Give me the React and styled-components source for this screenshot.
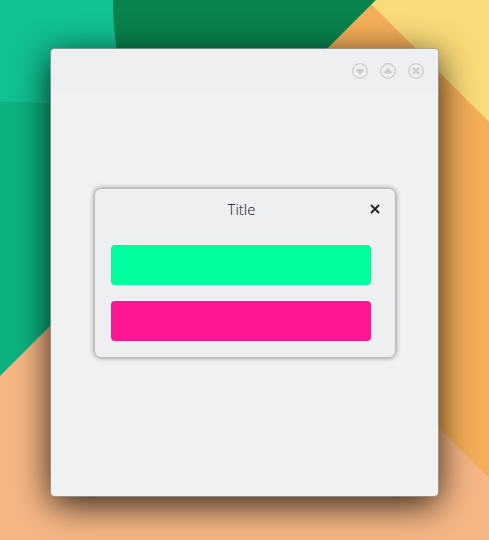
import React from 'react';
import styled, { createGlobalStyle } from 'styled-components';

const GlobalStyle = createGlobalStyle`
  *, *::before, *::after { box-sizing: border-box; }
  body { margin: 0; font-family: "Open Sans", "Noto Sans", sans-serif; }
`;

const Desktop = styled.main`
  position: relative;
  isolation: isolate;
  display: flex;
  min-height: 100vh;
  padding: 49px 51px 44px;
  background: #f7b785;
  overflow: hidden;
`;

const Wallpaper = styled.svg`
  position: absolute;
  inset: 0;
  z-index: -1;
  width: 100%;
  height: 100%;
`;

const Window = styled.section`
  flex: 1;
  display: grid;
  grid-template-rows: 44px 1fr;
  grid-template-columns: 1fr;
  border-radius: 4px;
  background: #f1f1f1;
  box-shadow:
    0 0 0 1px rgba(160, 160, 160, 0.7),
    0 8px 36px rgba(0, 0, 0, 0.85);
`;

const TitleBar = styled.header`
  grid-area: 1 / 1;
  display: flex;
  align-items: center;
  justify-content: flex-end;
  gap: 12px;
  padding: 0 14px;
  border-radius: 4px 4px 0 0;
  background: #eeeff1;
`;

const IconButton = styled.button`
  display: grid;
  place-items: center;
  width: 16px;
  height: 16px;
  padding: 0;
  border: 0;
  background: none;
  color: ${({ $color }) => $color};
`;

const Dialog = styled.section`
  grid-area: 1 / 1 / 3 / 2;
  place-self: center;
  width: 300px;
  max-width: 100%;
  border-radius: 6px;
  background: #eeeff1;
  box-shadow: 0 0 5px 1px rgba(0, 0, 0, 0.4);
`;

const DialogHeader = styled.header`
  display: grid;
  grid-template-columns: 1fr 16px;
  align-items: center;
  height: 40px;
  padding: 0 12px 0 22px;
`;

const DialogTitle = styled.h1`
  margin: 0;
  font-size: 15px;
  font-weight: 300;
  line-height: 20px;
  text-align: center;
  color: #101214;
`;

const DialogBody = styled.div`
  display: grid;
  gap: 16px;
  padding: 16px 24px 16px 16px;
`;

const Bar = styled.div`
  height: 40px;
  border-radius: 4px;
  background: ${({ $color }) => $color};
`;

function WindowButton({ label, children }) {
  return (
    <IconButton type="button" aria-label={label} $color="#c9cacb">
      <svg width="16" height="16" viewBox="0 0 16 16" fill="none" stroke="currentColor">
        <circle cx="8" cy="8" r="7.3" strokeWidth="1.2" />
        {children}
      </svg>
    </IconButton>
  );
}

export default function App() {
  return (
    <>
      <GlobalStyle />
      <Desktop>
        <Wallpaper viewBox="0 0 489 540" preserveAspectRatio="none" aria-hidden="true">
          <path d="M0 0H376L0 376Z" fill="#0eb280" />
          <path d="M0 0H130V120Q60 100 0 102Z" fill="#11c193" />
          <path d="M113 0H376L250 126H138Q113 65 113 0Z" fill="#09834c" />
          <path d="M372 4L489 121V478L193 183Z" fill="#f5ae58" />
          <path d="M376 0H489V122L371.500 4.500Z" fill="#fada79" />
        </Wallpaper>
        <Window>
          <TitleBar>
            <WindowButton label="Minimize">
              <path d="M4.500 6H11.500V8L8 11.500L4.500 8Z" fill="currentColor" stroke="none" />
            </WindowButton>
            <WindowButton label="Maximize">
              <path d="M4.500 10.500V9L8 5L11.500 9V10.500Z" fill="currentColor" stroke="none" />
            </WindowButton>
            <WindowButton label="Close window">
              <path d="M5 5L11 11M11 5L5 11" strokeWidth="1.900" />
            </WindowButton>
          </TitleBar>
          <Dialog role="dialog" aria-labelledby="dialog-title">
            <DialogHeader>
              <DialogTitle id="dialog-title">Title</DialogTitle>
              <IconButton type="button" aria-label="Close dialog" $color="#202326">
                <svg width="16" height="16" viewBox="0 0 16 16" fill="none" stroke="currentColor">
                  <path d="M4 4L12 12M12 4L4 12" strokeWidth="1.800" />
                </svg>
              </IconButton>
            </DialogHeader>
            <DialogBody>
              <Bar $color="#00ff9c" />
              <Bar $color="#ff1694" />
            </DialogBody>
          </Dialog>
        </Window>
      </Desktop>
    </>
  );
}
